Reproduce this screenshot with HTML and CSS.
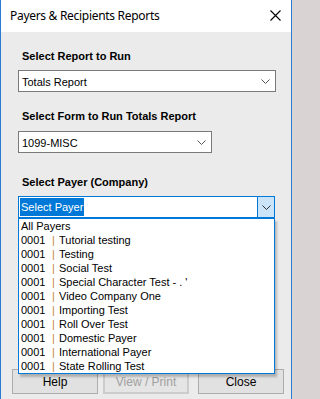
FILE: index.html
```html
<!DOCTYPE html>
<html>
<head>
<meta charset="utf-8">
<link rel="stylesheet" href="styles.css">
</head>
<body>
<div class="window">
  <div class="titlebar">
    <span class="title">Payers &amp; Recipients Reports</span>
    <svg class="close-x" width="11" height="11" viewBox="0 0 11 11"><path d="M0.5 0.5L10.5 10.5M10.5 0.5L0.5 10.5" stroke="#000" stroke-width="1.1" fill="none"/></svg>
  </div>
  <div class="content">
    <div class="label l1">Select Report to Run</div>
    <div class="select s1"><span class="val">Totals Report</span><svg class="chev" width="9" height="5" viewBox="0 0 9 5"><path d="M0.5 0.5L4.5 4.5L8.5 0.5" stroke="#555" fill="none"/></svg></div>
    <div class="label l2">Select Form to Run Totals Report</div>
    <div class="select s2"><span class="val">1099-MISC</span><svg class="chev" width="9" height="5" viewBox="0 0 9 5"><path d="M0.5 0.5L4.5 4.5L8.5 0.5" stroke="#555" fill="none"/></svg></div>
    <div class="label l3">Select Payer (Company)</div>
    <div class="combo">
      <span class="sel">Select Payer</span>
      <span class="combo-btn"><svg width="9" height="5" viewBox="0 0 9 5"><path d="M0.5 0.5L4.5 4.5L8.5 0.5" stroke="#333" fill="none"/></svg></span>
      <div class="list">
        <div class="row">All Payers</div>
        <div class="row"><span class="code">0001</span><span class="pipe">|</span><span>Tutorial testing</span></div>
        <div class="row"><span class="code">0001</span><span class="pipe">|</span><span>Testing</span></div>
        <div class="row"><span class="code">0001</span><span class="pipe">|</span><span>Social Test</span></div>
        <div class="row"><span class="code">0001</span><span class="pipe">|</span><span>Special Character Test - . '</span></div>
        <div class="row"><span class="code">0001</span><span class="pipe">|</span><span>Video Company One</span></div>
        <div class="row"><span class="code">0001</span><span class="pipe">|</span><span>Importing Test</span></div>
        <div class="row"><span class="code">0001</span><span class="pipe">|</span><span>Roll Over Test</span></div>
        <div class="row"><span class="code">0001</span><span class="pipe">|</span><span>Domestic Payer</span></div>
        <div class="row"><span class="code">0001</span><span class="pipe">|</span><span>International Payer</span></div>
        <div class="row"><span class="code">0001</span><span class="pipe">|</span><span>State Rolling Test</span></div>
      </div>
    </div>
  </div>
  <div class="buttons">
    <div class="btn b-help">Help</div>
    <div class="btn b-view disabled">View / Print</div>
    <div class="btn b-close">Close</div>
  </div>
</div>
</body>
</html>
```

FILE: styles.css
```css
html, body {
  margin: 0;
  padding: 0;
}
body {
  width: 293px;
  height: 399px;
  background: #d9d3d3;
  overflow: hidden;
}
.window {
  width: 290px;
  height: 399px;
  border-left: 1px solid #2b7bd3;
  border-right: 1px solid #2b7bd3;
  background: #ebebeb;
  display: flex;
  flex-direction: column;
  font-family: "Liberation Sans", Arial, sans-serif;
  color: #000;
}
.titlebar {
  height: 32px;
  flex: none;
  background: #fff;
  display: flex;
  align-items: center;
  justify-content: space-between;
  padding: 0 10px 0 9px;
}
.title {
  font-family: "Noto Sans", sans-serif;
  font-size: 12px;
  letter-spacing: -0.3px;
  margin-top: -1px;
}
.close-x {
  margin-top: -1px;
}
.content {
  padding: 0 16px 0 17px;
  display: flex;
  flex-direction: column;
}
.label {
  font-weight: bold;
  font-size: 11px;
  line-height: 14px;
  height: 14px;
  padding-left: 4px;
}
.l1 { margin-top: 17px; }
.l2 { margin-top: 17px; }
.l3 { margin-top: 22px; }
.select {
  height: 20px;
  border: 1px solid #7a7a7a;
  background: #fff;
  display: flex;
  align-items: center;
  justify-content: space-between;
  padding: 0 5px 0 3px;
  font-size: 11px;
  margin-top: 7px;
}
.s1 { width: 248px; }
.s2 { width: 184px; margin-top: 8px; }
.val { margin-top: 1px; }
.combo {
  position: relative;
  margin-top: 7px;
  width: 255px;
  height: 20px;
  border: 1px solid #0078d7;
  background: #fff;
  display: flex;
  align-items: stretch;
  font-size: 11px;
}
.sel {
  background: #0078d7;
  color: #fff;
  margin: 1px 0 1px 1px;
  padding: 0 1px;
  line-height: 18px;
}
.combo-btn {
  margin-left: auto;
  width: 16px;
  background: #cce4f7;
  border-left: 1px solid #0078d7;
  display: flex;
  align-items: center;
  justify-content: center;
}
.list {
  position: absolute;
  left: -1px;
  top: 21px;
  width: 255px;
  height: 154px;
  border: 1px solid #0078d7;
  background: #fff;
  box-shadow: 2px 3px 2px rgba(0,0,0,0.22);
  z-index: 2;
}
.row {
  height: 14px;
  line-height: 14px;
  padding-left: 2px;
  display: flex;
  white-space: pre;
}
.code { width: 31px; }
.pipe { width: 7px; color: #c8823a; }
.buttons {
  margin-top: auto;
  display: flex;
  padding: 0 0 5px 11px;
}
.btn {
  height: 23px;
  width: 84px;
  border: 1px solid #adadad;
  background: #e1e1e1;
  font-size: 12px;
  display: flex;
  align-items: center;
  justify-content: center;
}
.b-view { margin-left: 5px; }
.b-close { margin-left: 9px; }
.disabled {
  color: #a0a0a0;
  border: 2px solid #cccccc;
  height: 21px;
  width: 82px;
  background: #e5e5e5;
}
```
